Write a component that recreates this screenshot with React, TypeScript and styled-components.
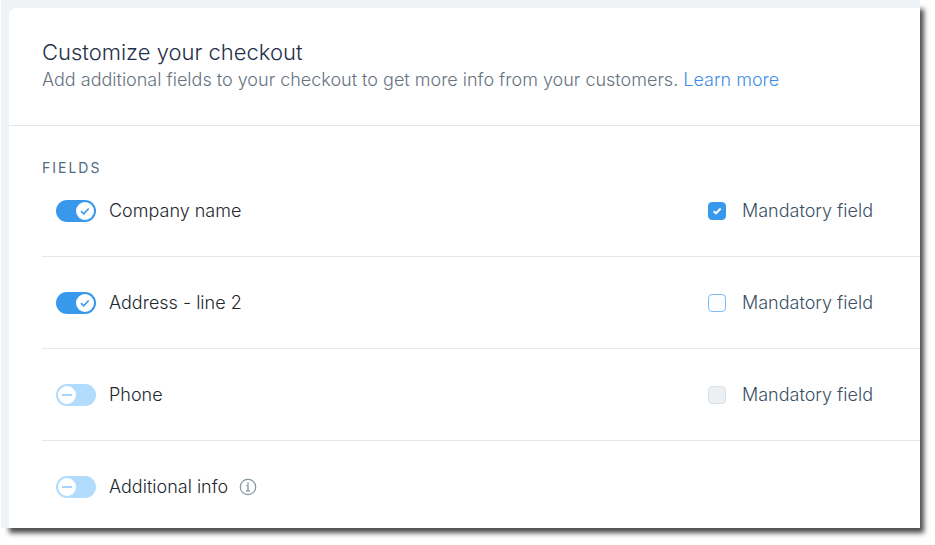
import React, { useState } from "react";
import styled, { createGlobalStyle } from "styled-components";

const GlobalStyle = createGlobalStyle`
  *, *::before, *::after { box-sizing: border-box; }
  body {
    margin: 0;
    background: #ffffff;
    font-family: Inter, "Open Sans", sans-serif;
    font-size: 18px;
    font-weight: 300;
    line-height: 22px;
  }
`;

const Frame = styled.main`
  margin: 0 15px 17px 1px;
  padding: 8px 0 0 8px;
  background: #eff3f6;
  box-shadow: 6px 7px 5px -2px rgba(0, 0, 0, 0.7);
`;

const Card = styled.section`
  background: #ffffff;
  border-top-left-radius: 8px;
`;

const CardHeader = styled.header`
  padding: 29px 33px 33px;
  border-bottom: 1px solid #dfe5eb;
`;

const Title = styled.h1`
  margin: 0;
  font-size: 22px;
  font-weight: 300;
  line-height: 30px;
  color: #1f304a;
`;

const Subtitle = styled.p`
  margin: 0;
  line-height: 25px;
  color: #66737f;
`;

const Link = styled.a`
  color: #3f8fe8;
  text-decoration: none;
`;

const CardBody = styled.div`
  padding: 30px 0 0 33px;
`;

const SectionTitle = styled.h2`
  margin: 0 0 20px;
  font-size: 14px;
  font-weight: 400;
  line-height: 24px;
  letter-spacing: 2px;
  color: #526a80;
`;

const FieldList = styled.ul`
  margin: 0;
  padding: 0;
  list-style: none;
`;

const FieldRow = styled.li`
  display: grid;
  grid-template-columns: 1fr 212px;
  align-items: center;
  padding: 35px 0 34px 14px;
  border-bottom: 1px solid #e1e8ee;

  &:first-child { padding-top: 0; }
  &:last-child { padding-bottom: 30px; border-bottom: 0; }
`;

const FieldCell = styled.div`
  display: flex;
  align-items: center;
  gap: 11px;
`;

const ControlLabel = styled.label<{ $gap: number; $color: string }>`
  display: flex;
  align-items: center;
  gap: ${(p) => p.$gap}px;
  color: ${(p) => p.$color};
`;

const ControlBox = styled.span`
  display: grid;
  align-items: center;

  > * { grid-area: 1 / 1; }
  > svg { pointer-events: none; }
`;

const SwitchInput = styled.input`
  appearance: none;
  width: 40px;
  height: 22px;
  margin: 0;
  border-radius: 11px;
  background: #b2dcfd;

  &:checked { background: #3899ec; }
`;

const CheckInput = styled.input`
  appearance: none;
  width: 18px;
  height: 18px;
  margin: 0;
  border: 1px solid #7fbcf5;
  border-radius: 4px;
  background: #fcfdfe;

  &:checked { background: #3899ec; border-color: #3899ec; }
  &:disabled { background: #ecf0f3; border-color: #d9e1e8; }
`;

const InfoButton = styled.button`
  display: flex;
  padding: 0;
  border: 0;
  background: none;
  color: #8296a6;
`;

function Switch({ on, onChange }: { on: boolean; onChange: () => void }) {
  return (
    <ControlBox>
      <SwitchInput type="checkbox" role="switch" checked={on} onChange={onChange} />
      <svg width="40" height="22" viewBox="0 0 40 22" fill="none" aria-hidden="true">
        <circle cx={on ? 29 : 11} cy="11" r="9" fill="#fff" />
        {on ? (
          <path d="M25 11.2l2.7 2.6 5-5.3" stroke="#3899ec" strokeWidth="1.6" />
        ) : (
          <path d="M6 11h10" stroke="#a5d5fc" strokeWidth="2" />
        )}
      </svg>
    </ControlBox>
  );
}

function MandatoryCheckbox({ initial, disabled }: { initial: boolean; disabled: boolean }) {
  const [checked, setChecked] = useState(initial);
  return (
    <ControlLabel $gap={16} $color="#3b4f66">
      <ControlBox>
        <CheckInput
          type="checkbox"
          checked={checked}
          disabled={disabled}
          onChange={() => setChecked(!checked)}
        />
        {checked && (
          <svg width="18" height="18" viewBox="0 0 18 18" fill="none" aria-hidden="true">
            <path d="M5.7 9.3l2.3 2.2 4.6-5" stroke="#fff" strokeWidth="1.9" />
          </svg>
        )}
      </ControlBox>
      Mandatory field
    </ControlLabel>
  );
}

function InfoIcon() {
  return (
    <svg width="18" height="18" viewBox="0 0 18 18" fill="none" stroke="currentColor" aria-hidden="true">
      <circle cx="9" cy="9" r="7.7" strokeWidth="1.2" />
      <path d="M7.3 7.7H9v5M7 12.8h4" strokeWidth="1.3" />
      <circle cx="9" cy="5.4" r="1" fill="currentColor" stroke="none" />
    </svg>
  );
}

type Field = {
  name: string;
  enabled: boolean;
  mandatory?: boolean;
  info?: boolean;
};

const fields: Field[] = [
  { name: "Company name", enabled: true, mandatory: true },
  { name: "Address - line 2", enabled: true, mandatory: false },
  { name: "Phone", enabled: false, mandatory: false },
  { name: "Additional info", enabled: false, info: true },
];

function FieldItem({ field }: { field: Field }) {
  const [on, setOn] = useState(field.enabled);
  return (
    <FieldRow>
      <FieldCell>
        <ControlLabel $gap={13} $color="#24282f">
          <Switch on={on} onChange={() => setOn(!on)} />
          {field.name}
        </ControlLabel>
        {field.info && (
          <InfoButton type="button" aria-label="About additional info">
            <InfoIcon />
          </InfoButton>
        )}
      </FieldCell>
      {field.mandatory !== undefined && (
        <MandatoryCheckbox initial={field.mandatory} disabled={!on} />
      )}
    </FieldRow>
  );
}

export default function App() {
  return (
    <>
      <GlobalStyle />
      <Frame>
        <Card>
          <CardHeader>
            <Title>Customize your checkout</Title>
            <Subtitle>
              Add additional fields to your checkout to get more info from your customers.{" "}
              <Link href="#learn-more">Learn more</Link>
            </Subtitle>
          </CardHeader>
          <CardBody>
            <SectionTitle>FIELDS</SectionTitle>
            <FieldList>
              {fields.map((field) => (
                <FieldItem key={field.name} field={field} />
              ))}
            </FieldList>
          </CardBody>
        </Card>
      </Frame>
    </>
  );
}
